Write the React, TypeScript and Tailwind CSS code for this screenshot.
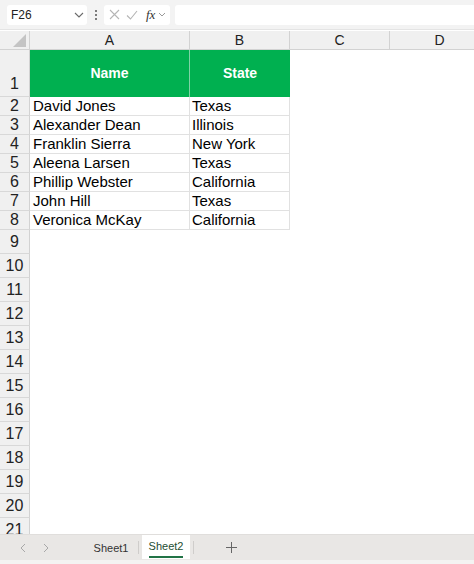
import React from 'react';

const rows: { n: number; h: number; a?: string; b?: string }[] = [
  { n: 2, h: 19, a: 'David Jones', b: 'Texas' },
  { n: 3, h: 19, a: 'Alexander Dean', b: 'Illinois' },
  { n: 4, h: 19, a: 'Franklin Sierra', b: 'New York' },
  { n: 5, h: 19, a: 'Aleena Larsen', b: 'Texas' },
  { n: 6, h: 19, a: 'Phillip Webster', b: 'California' },
  { n: 7, h: 19, a: 'John Hill', b: 'Texas' },
  { n: 8, h: 19, a: 'Veronica McKay', b: 'California' },
];

const emptyRows = [9, 10, 11, 12, 13, 14, 15, 16, 17, 18, 19, 20, 21];

function Chevron({ className = '' }: { className?: string }) {
  return (
    <svg width="10" height="6" viewBox="0 0 10 6" className={className}>
      <path d="M1 1l4 4 4-4" fill="none" stroke="#6b6b6b" strokeWidth="1.1" />
    </svg>
  );
}

function TopBar() {
  return (
    <div className="h-[30px] bg-[#f3f3f3] flex items-center pl-[7px] gap-0 border-b border-[#e4e4e4]">
      <div className="w-[80px] h-[20px] bg-white rounded-[3px] flex items-center justify-between pl-[4px] pr-[3px] text-[12px] text-[#222]">
        <span>F26</span>
        <Chevron />
      </div>
      <div className="w-[17px] flex flex-col items-center gap-[2px]">
        <span className="w-[2px] h-[2px] bg-[#555] rounded-full" />
        <span className="w-[2px] h-[2px] bg-[#555] rounded-full" />
        <span className="w-[2px] h-[2px] bg-[#555] rounded-full" />
      </div>
      <div className="w-[66px] h-[20px] bg-white rounded-[3px] flex items-center pl-[5px] gap-[6px]">
        <svg width="11" height="11" viewBox="0 0 11 11">
          <path d="M1 1l9 9M10 1l-9 9" stroke="#b5b5b5" strokeWidth="1.1" />
        </svg>
        <svg width="12" height="10" viewBox="0 0 12 10">
          <path d="M1 5.5l3.5 3.5L11 1" fill="none" stroke="#b5b5b5" strokeWidth="1.1" />
        </svg>
        <span className="font-['Liberation_Serif',serif] italic text-[13px] text-[#333] leading-none ml-[2px]">fx</span>
        <svg width="8" height="5" viewBox="0 0 8 5" className="-ml-[3px]">
          <path d="M1 1l3 3 3-3" fill="none" stroke="#9a9a9a" strokeWidth="1" />
        </svg>
      </div>
      <div className="ml-[5px] flex-1 h-[20px] bg-white rounded-l-[3px]" />
    </div>
  );
}

function ColumnHeader() {
  return (
    <div className="flex h-[19px] bg-[#f0f0f0] border-b border-[#d2d2d2] text-[14px] text-[#222] leading-none">
      <div className="w-[30px] shrink-0 border-r border-[#d2d2d2] relative">
        <svg width="13" height="13" viewBox="0 0 13 13" className="absolute right-[3px] bottom-[2px]">
          <path d="M13 0L13 13L0 13Z" fill="#c4c4c4" />
        </svg>
      </div>
      {[
        ['A', 'w-[160px]'],
        ['B', 'w-[100px]'],
        ['C', 'w-[100px]'],
        ['D', 'w-[100px]'],
      ].map(([l, w]) => (
        <div key={l} className={`${w} shrink-0 border-r border-[#d2d2d2] flex items-center justify-center`}>
          {l}
        </div>
      ))}
    </div>
  );
}

function RowHead({ n, h, bottom = false }: { n: number; h: number; bottom?: boolean }) {
  return (
    <div
      className={`w-[30px] shrink-0 bg-[#f0f0f0] border-r border-[#d2d2d2] border-b border-b-[#d8d8d8] flex justify-center text-[16px] text-[#222] leading-none ${
        bottom ? 'items-end pb-[4px]' : 'items-center'
      }`}
      style={{ height: h }}
    >
      {n}
    </div>
  );
}

export default function App() {
  return (
    <div className="w-[474px] h-[564px] bg-white flex flex-col overflow-hidden font-['Liberation_Sans',Arial,sans-serif]">
      <TopBar />
      <div className="h-[1px] bg-white" />
      <ColumnHeader />
      <div className="flex-1 overflow-hidden">
        <div className="flex">
          <RowHead n={1} h={47} bottom />
          <div className="w-[160px] h-[47px] shrink-0 bg-[#00b050] border-r border-[#7fd3a5] flex items-center justify-center text-white font-bold text-[14px]">
            Name
          </div>
          <div className="w-[100px] h-[47px] shrink-0 bg-[#00b050] flex items-center justify-center text-white font-bold text-[14px]">
            State
          </div>
        </div>
        {rows.map((r) => (
          <div key={r.n} className="flex">
            <RowHead n={r.n} h={r.h} />
            <div className="w-[160px] h-[19px] shrink-0 border-r border-b border-[#e1e1e1] pl-[3px] text-[15px] leading-[18px] text-black">
              {r.a}
            </div>
            <div className="w-[100px] h-[19px] shrink-0 border-r border-b border-[#e1e1e1] pl-[2px] text-[15px] leading-[18px] text-black">
              {r.b}
            </div>
          </div>
        ))}
        {emptyRows.map((n) => (
          <div key={n} className="flex">
            <RowHead n={n} h={24} />
          </div>
        ))}
      </div>
      <div className="h-[26px] shrink-0 bg-[#e9e7e5] border-t border-[#e0dedc] flex items-stretch text-[11px] text-[#333]">
        <div className="w-[74px] flex items-center pl-[20px] gap-[17px]">
          <svg width="6" height="10" viewBox="0 0 6 10">
            <path d="M5 1L1 5l4 4" fill="none" stroke="#a8a8a8" strokeWidth="1" />
          </svg>
          <svg width="6" height="10" viewBox="0 0 6 10">
            <path d="M1 1l4 4-4 4" fill="none" stroke="#a8a8a8" strokeWidth="1" />
          </svg>
        </div>
        <div className="w-[64px] flex items-center justify-center pl-[10px] pt-[2px]">Sheet1</div>
        <div className="w-[1px] bg-[#cfcdcb] my-[6px]" />
        <div className="w-[48px] bg-white mb-[1px] flex flex-col items-center justify-center pt-[2px] mx-[3px]">
          <span className="text-[#1e4d33]">Sheet2</span>
          <span className="w-[34px] h-[2px] bg-[#217346] mt-[2px]" />
        </div>
        <div className="w-[1px] bg-[#cfcdcb] my-[6px]" />
        <div className="w-[74px] flex items-center justify-center">
          <svg width="11" height="11" viewBox="0 0 11 11">
            <path d="M5.5 0v11M0 5.5h11" stroke="#666" strokeWidth="1" />
          </svg>
        </div>
      </div>
      <div className="h-[4px] shrink-0 bg-[#f4f3f2]" />
    </div>
  );
}
